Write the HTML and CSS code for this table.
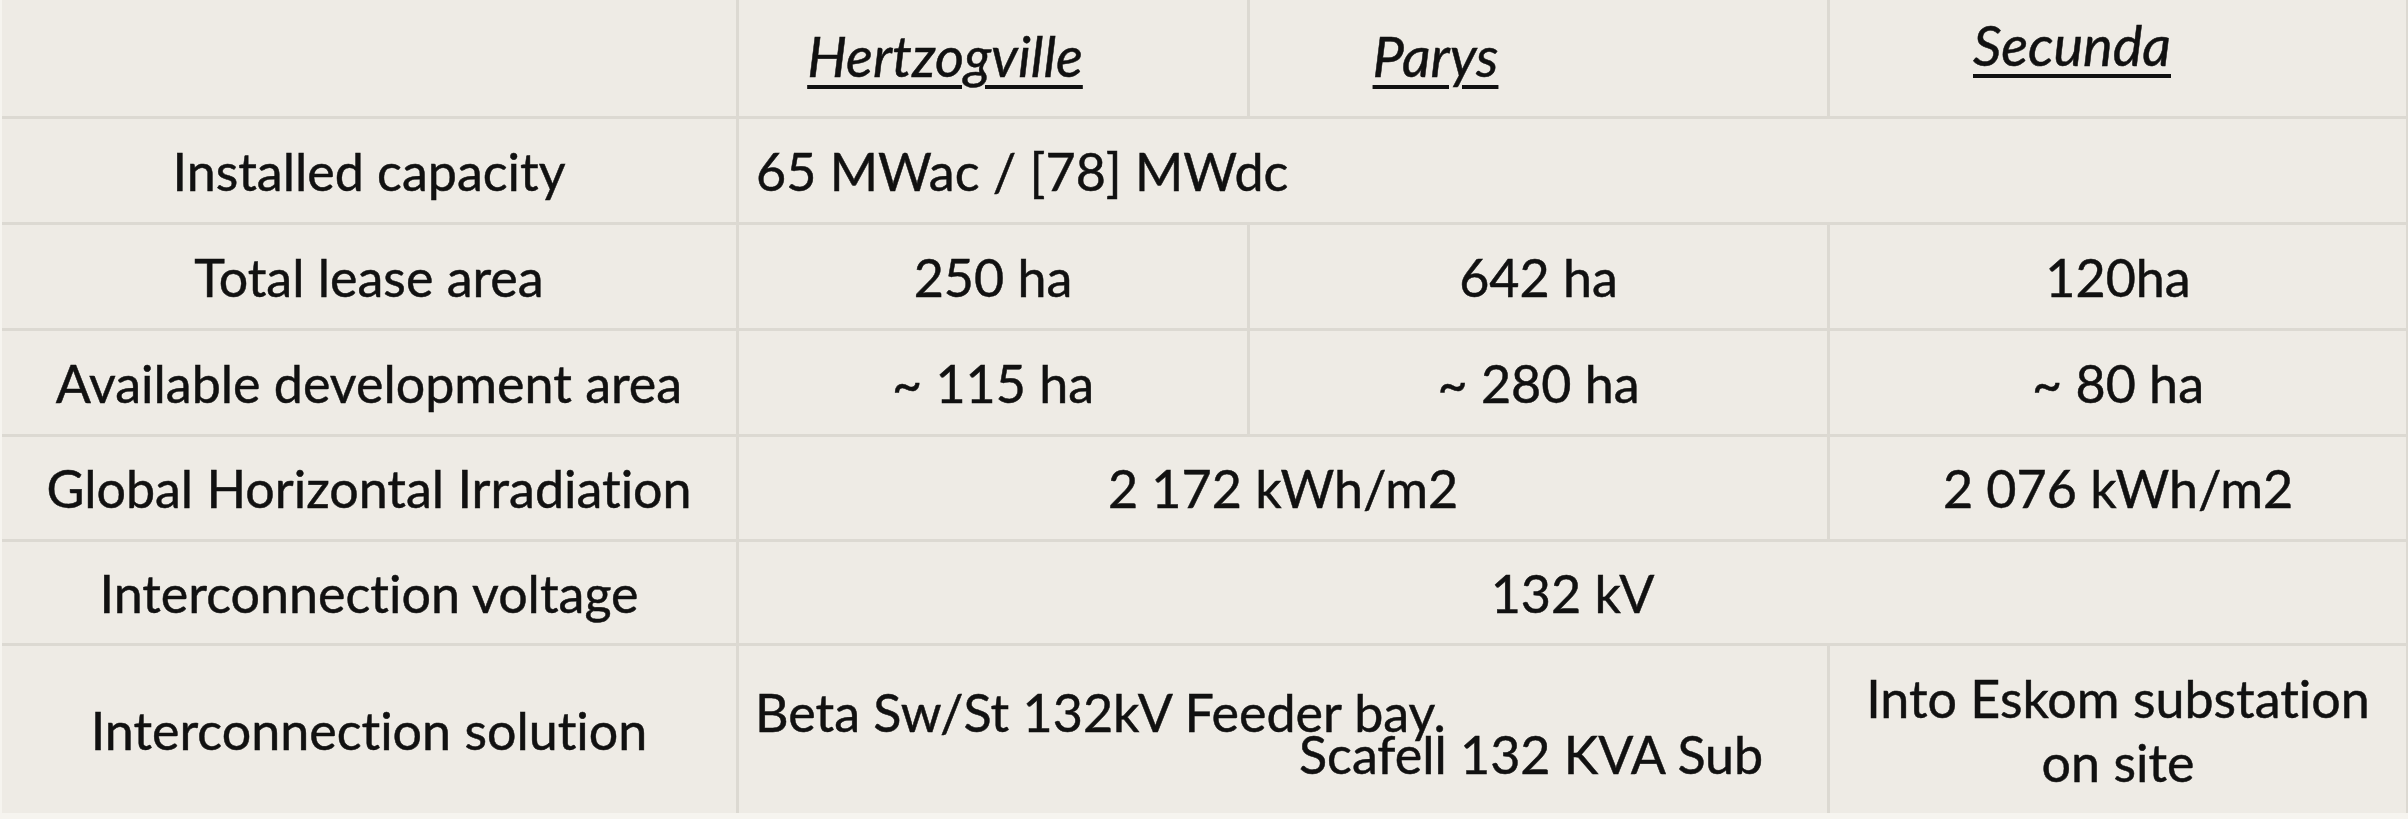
FILE: index.html
```html
<!DOCTYPE html>
<html lang="en">
<head>
<meta charset="utf-8">
<title>Project sites</title>
<link rel="stylesheet" href="styles.css">
</head>
<body>
<div class="sheet">
  <div class="cell head-blank"></div>
  <div class="cell head head-1"><span class="site">Hertzogville</span></div>
  <div class="cell head head-2"><span class="site">Parys</span></div>
  <div class="cell head head-3"><span class="site">Secunda</span></div>

  <div class="cell label">Installed capacity</div>
  <div class="cell value span-3 left">65 MWac / [78] MWdc</div>

  <div class="cell label">Total lease area</div>
  <div class="cell value">250 ha</div>
  <div class="cell value">642 ha</div>
  <div class="cell value">120ha</div>

  <div class="cell label">Available development area</div>
  <div class="cell value">~ 115 ha</div>
  <div class="cell value">~ 280 ha</div>
  <div class="cell value">~ 80 ha</div>

  <div class="cell label">Global Horizontal Irradiation</div>
  <div class="cell value span-2">2 172 kWh/m2</div>
  <div class="cell value">2 076 kWh/m2</div>

  <div class="cell label">Interconnection voltage</div>
  <div class="cell value span-3">132 kV</div>

  <div class="cell label">Interconnection solution</div>
  <div class="cell value span-2 solution">
    <div class="sol-line sol-first">Beta Sw/St 132kV Feeder bay.</div>
    <div class="sol-line sol-second">Scafell 132 KVA Sub</div>
  </div>
  <div class="cell value two-line">Into Eskom substation<br>on site</div>
</div>
</body>
</html>
```

FILE: styles.css
```css
html, body {
  margin: 0;
  padding: 0;
  background: #f6f4ef;
}

body {
  font-family: "Lato", "Liberation Sans", sans-serif;
  color: #111111;
  font-variant-ligatures: none;
}

.sheet {
  margin-left: 2px;
  width: 2404px;
  display: grid;
  grid-template-columns: 734px 508px 577px 576px;
  grid-template-rows: 116px 103px 103px 103px 102px 101px 167px;
  column-gap: 3px;
  row-gap: 3px;
  background: #dcd9d2;
  border-right: 3px solid #dcd9d2;
}

.cell {
  background: #eeebe5;
  display: flex;
  align-items: center;
  justify-content: center;
  font-size: 52px;
  line-height: 1;
  white-space: nowrap;
  -webkit-text-stroke: 0.5px #111111;
}

.label {
  justify-content: center;
}

.span-2 {
  grid-column: span 2;
}

.span-3 {
  grid-column: span 3;
}

.left {
  justify-content: flex-start;
  padding-left: 17px;
}

.head {
  align-items: flex-start;
  font-size: 56px;
}

.site {
  font-style: italic;
  text-decoration: underline;
  text-decoration-thickness: 4px;
  text-underline-offset: 8px;
}

.head-1 {
  padding-right: 96px;
  padding-top: 28px;
}

.head-2 {
  padding-right: 206px;
  padding-top: 28px;
}

.head-3 {
  padding-right: 92px;
  padding-top: 17px;
}

.solution {
  flex-direction: column;
  align-items: stretch;
  justify-content: center;
  line-height: 42px;
  padding-top: 6px;
}

.sol-first {
  padding-left: 16px;
}

.sol-second {
  padding-left: 560px;
}

.two-line {
  text-align: center;
  line-height: 64px;
}
```
